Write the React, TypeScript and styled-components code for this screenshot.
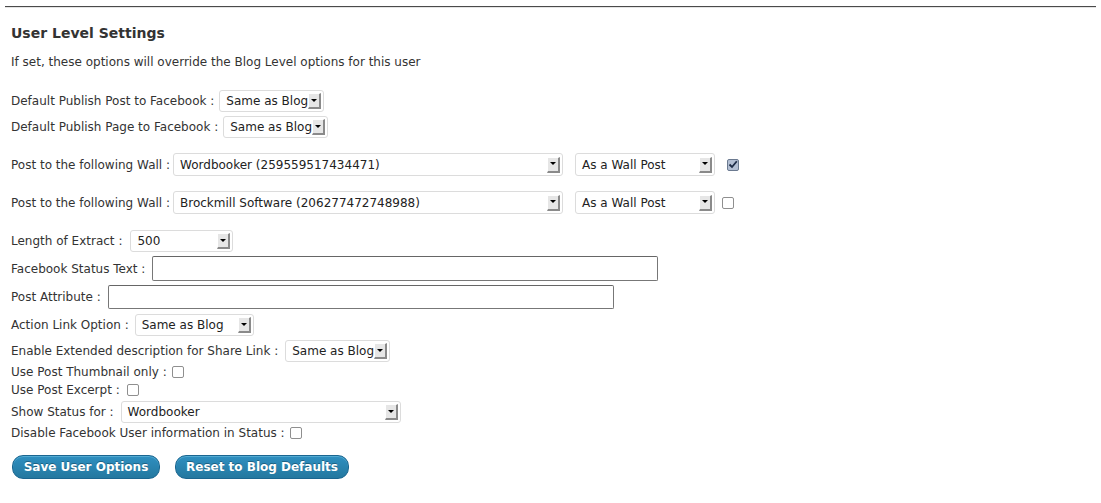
import React from "react";
import styled, { createGlobalStyle } from "styled-components";

const Global = createGlobalStyle`
  html, body { margin: 0; padding: 0; background: #fff; }
  body { font-family: "DejaVu Sans", sans-serif; font-size: 12px; color: #333; }
`;

const Page = styled.div`
  padding: 6px 5px 0 5px;
`;

const Rule = styled.div`
  height: 1px;
  background: #4a4a4a;
  border-bottom: 1px solid #e4e4e4;
`;

const Content = styled.div`
  padding-left: 6px;
  display: flex;
  flex-direction: column;
  align-items: flex-start;
`;

const Heading = styled.h3`
  margin: 16px 0 0 0;
  height: 18px;
  line-height: 18px;
  font-size: 14px;
  font-weight: bold;
  color: #333;
`;

const Desc = styled.p`
  margin: 12px 0 0 0;
  height: 16px;
  line-height: 16px;
`;

const Row = styled.div<{ $mt: number; $h: number; $gap?: number }>`
  display: flex;
  align-items: center;
  gap: ${(p) => p.$gap ?? 5}px;
  margin-top: ${(p) => p.$mt}px;
  height: ${(p) => p.$h}px;
  white-space: nowrap;
`;

const Label = styled.span``;

const SelectBox = styled.div<{ $w: number; $h?: number; $ml?: number }>`
  box-sizing: border-box;
  min-width: ${(p) => p.$w}px;
  height: ${(p) => p.$h ?? 22}px;
  margin-left: ${(p) => p.$ml ?? 0}px;
  border: 1px solid #dcdcdc;
  border-radius: 3px;
  background: #fff;
  display: flex;
  align-items: center;
  padding: 0 2px 0 6px;
  color: #222;
`;

const SelectText = styled.span`
  flex: 1 0 auto;
  white-space: nowrap;
`;

const Arrow = styled.span`
  box-sizing: border-box;
  flex: 0 0 auto;
  width: 13px;
  height: 16px;
  background: #e6e6e6;
  border-top: 1px solid #fff;
  border-left: 1px solid #fff;
  border-right: 2px solid #8a8a8a;
  border-bottom: 2px solid #8a8a8a;
  display: flex;
  align-items: center;
  justify-content: center;
  &::after {
    content: "";
    border-left: 3px solid transparent;
    border-right: 3px solid transparent;
    border-top: 3px solid #000;
    margin-top: -1px;
  }
`;

const Select = ({ w, value, h, ml }: { w: number; value: string; h?: number; ml?: number }) => (
  <SelectBox $w={w} $h={h} $ml={ml}>
    <SelectText>{value}</SelectText>
    <Arrow />
  </SelectBox>
);

const TextInput = styled.div<{ $w: number; $h: number }>`
  box-sizing: border-box;
  width: ${(p) => p.$w}px;
  height: ${(p) => p.$h}px;
  border: 1px solid #777;
  border-top-color: #666;
  border-radius: 2px;
  background: #fff;
`;

const Check = styled.span<{ $checked?: boolean; $ml?: number }>`
  box-sizing: border-box;
  display: inline-flex;
  align-items: center;
  justify-content: center;
  width: 12px;
  height: 12px;
  margin-left: ${(p) => p.$ml ?? 0}px;
  border: 1px solid ${(p) => (p.$checked ? "#6b7a90" : "#8f8f8f")};
  border-radius: 2px;
  background: ${(p) => (p.$checked ? "#b3bfd3" : "#fff")};
`;

const Buttons = styled.div`
  display: flex;
  gap: 15px;
  margin-top: 14px;
  margin-left: 1px;
`;

const Button = styled.button<{ $w: number }>`
  box-sizing: border-box;
  width: ${(p) => p.$w}px;
  height: 24px;
  border: 1px solid #1b6690;
  border-radius: 11px;
  background: linear-gradient(to bottom, #2f8fc0 0%, #24789f 100%);
  color: #fff;
  font-family: "DejaVu Sans", sans-serif;
  font-weight: bold;
  font-size: 12px;
  text-shadow: 0 -1px 0 rgba(0, 0, 0, 0.3);
  padding: 0;
  box-shadow: inset 0 1px 0 rgba(120, 200, 230, 0.5);
`;

const CheckMark = () => (
  <svg width="10" height="9" viewBox="0 0 10 9">
    <path d="M1.5 4.5 L4 7 L8.8 1.2" fill="none" stroke="#1c2b45" strokeWidth="1.8" />
  </svg>
);

export default function App() {
  return (
    <Page>
      <Global />
      <Rule />
      <Content>
        <Heading>User Level Settings</Heading>
        <Desc>If set, these options will override the Blog Level options for this user</Desc>

        <Row $mt={20} $h={22}>
          <Label>Default Publish Post to Facebook :</Label>
          <Select w={104} value="Same as Blog" />
        </Row>
        <Row $mt={4} $h={22}>
          <Label>Default Publish Page to Facebook :</Label>
          <Select w={105} value="Same as Blog" />
        </Row>

        <Row $mt={15} $h={23} $gap={3}>
          <Label>Post to the following Wall :</Label>
          <Select w={390} h={23} value="Wordbooker (259559517434471)" />
          <Select w={140} h={23} ml={9} value="As a Wall Post" />
          <Check $checked $ml={9}>
            <CheckMark />
          </Check>
        </Row>
        <Row $mt={15} $h={23} $gap={3}>
          <Label>Post to the following Wall :</Label>
          <Select w={390} h={23} value="Brockmill Software (206277472748988)" />
          <Select w={140} h={23} ml={9} value="As a Wall Post" />
          <Check $ml={4} />
        </Row>

        <Row $mt={16} $h={22} $gap={8}>
          <Label>Length of Extract :</Label>
          <Select w={103} value="500" />
        </Row>
        <Row $mt={4} $h={25} $gap={7}>
          <Label>Facebook Status Text :</Label>
          <TextInput $w={506} $h={25} />
        </Row>
        <Row $mt={4} $h={24} $gap={7}>
          <Label>Post Attribute :</Label>
          <TextInput $w={506} $h={24} />
        </Row>
        <Row $mt={5} $h={22} $gap={6}>
          <Label>Action Link Option :</Label>
          <Select w={119} value="Same as Blog" />
        </Row>
        <Row $mt={4} $h={22} $gap={7}>
          <Label>Enable Extended description for Share Link :</Label>
          <Select w={104} value="Same as Blog" />
        </Row>
        <Row $mt={2} $h={16}>
          <Label>Use Post Thumbnail only :</Label>
          <Check />
        </Row>
        <Row $mt={1} $h={17} $gap={7}>
          <Label>Use Post Excerpt :</Label>
          <Check />
        </Row>
        <Row $mt={3} $h={22} $gap={7}>
          <Label>Show Status for :</Label>
          <Select w={280} value="Wordbooker" />
        </Row>
        <Row $mt={2} $h={16}>
          <Label>Disable Facebook User information in Status :</Label>
          <Check />
        </Row>

        <Buttons>
          <Button $w={148}>Save User Options</Button>
          <Button $w={174}>Reset to Blog Defaults</Button>
        </Buttons>
      </Content>
    </Page>
  );
}
